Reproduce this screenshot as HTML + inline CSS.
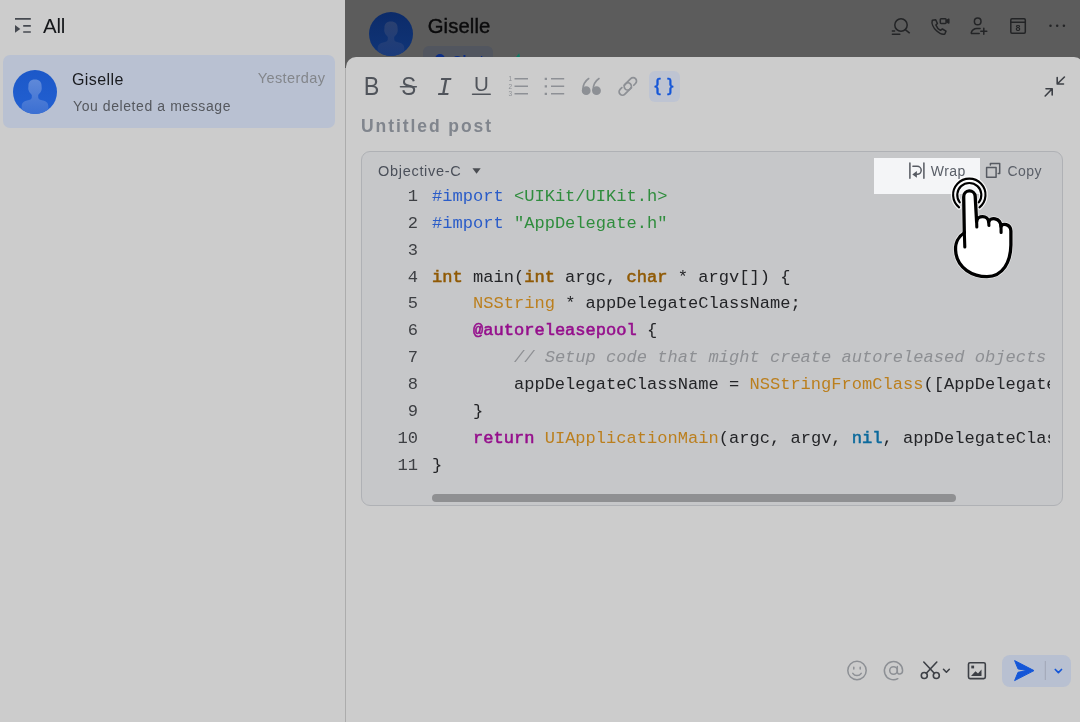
<!DOCTYPE html>
<html lang="en">
<head>
<meta charset="utf-8">
<title>Chat</title>
<style>
*{box-sizing:border-box;margin:0;padding:0}
html,body{width:1080px;height:722px;overflow:hidden;background:#cccccc;font-family:"Liberation Sans",sans-serif;}
.abs{position:absolute}
#side{position:absolute;left:0;top:0;width:345px;height:722px;background:#cccccc}
#divider{position:absolute;left:345px;top:0;width:1px;height:722px;background:#acacac}
#all{position:absolute;left:43px;top:14.500px;font-size:20.500px;color:#15171a;line-height:22px;letter-spacing:-0.2px}
#row{position:absolute;left:3px;top:55px;width:332px;height:73px;background:#b9c1d2;border-radius:7px}
#row .name{position:absolute;left:69px;top:15px;font-size:16px;letter-spacing:0.400px;color:#191b1f;line-height:20px}
#row .sub{position:absolute;left:70px;top:41.500px;font-size:14px;color:#55585e;line-height:18px;letter-spacing:0.580px}
#row .time{position:absolute;right:9.700px;top:15px;font-size:14.500px;color:#83868b;line-height:17px;letter-spacing:0.400px}
.avatar{position:absolute;border-radius:50%;overflow:hidden}
#hdr{position:absolute;left:345px;top:0;width:735px;height:68px;background:#5c5c5c;overflow:hidden}
#hdr .title{position:absolute;left:82.700px;top:14.250px;letter-spacing:0.100px;font-size:20.300px;color:#0b0b0c;line-height:24px;-webkit-text-stroke:0.4px #0b0b0c}
#panel{position:absolute;left:346px;top:57px;width:738px;height:665px;background:#cccccc;border-top-left-radius:10px;border-top-right-radius:10px}
#ptitle{position:absolute;left:15px;top:58px;font-size:17.500px;font-weight:bold;color:#80858d;line-height:22px;letter-spacing:1.920px}
#code{position:absolute;left:15px;top:94px;width:702px;height:355px;background:#c6c7c9;border:1px solid #afb1b5;border-radius:9px;overflow:hidden}
#lang{position:absolute;left:16px;top:10px;font-size:14.500px;letter-spacing:0.700px;color:#4b505a;line-height:18px}
#code pre{position:absolute;left:0;top:30px;font-family:"Liberation Mono",monospace;font-size:17.070px;line-height:26.85px;color:#222326;white-space:pre}
#nums{position:absolute;left:0;top:32.100px;width:56px;text-align:right;font-family:"Liberation Mono",monospace;font-size:17.070px;line-height:26.85px;color:#3d3f43;white-space:pre}
#src{position:absolute;left:70px;top:32.100px;width:618px;overflow:hidden;font-family:"Liberation Mono",monospace;font-size:17.070px;line-height:26.85px;color:#232427;white-space:pre}
.kp{color:#2a5cc8}.st{color:#2f8d3d}.kt{color:#905a05;-webkit-text-stroke:0.55px #905a05}.cl{color:#bb7f1e}.kw{color:#950f8c;-webkit-text-stroke:0.55px #950f8c}.cm{color:#8d8f93;font-style:italic}.nl{color:#0c6a9c;-webkit-text-stroke:0.55px #0c6a9c}
#sb{position:absolute;left:70px;top:342px;width:523.500px;height:8px;border-radius:4px;background:#8f9092}
#wrapbtn{position:absolute;left:874px;top:158px;width:106px;height:36px;background:#f4f5f7}
.btxt{position:absolute;font-size:14px;letter-spacing:0.450px;color:#5a5f68;line-height:18px}
.tl{position:absolute;text-align:center;color:#50545b;line-height:28px;height:28px;white-space:pre}
#sendbox{position:absolute;left:1002px;top:655px;width:69px;height:32px;border-radius:8px;background:#b8c0d1}
</style>
</head>
<body>
<div id="root" style="position:absolute;left:0;top:0;width:1080px;height:722px;will-change:transform;overflow:hidden">
<div id="side">
  <svg class="abs" style="left:0;top:0" width="40" height="40" viewBox="0 0 40 40" fill="none" stroke="#454950" stroke-width="1.7" stroke-linecap="butt"><path d="M15 18.9h15.800M23.200 25.800h7.600M23.200 32h7.600"/><path d="M15 25v7.800l5.300-3.900z" fill="#454950" stroke="none"/></svg>
  <div id="all">All</div>
  <div id="row">
    <div class="avatar" style="left:10.100px;top:14.500px;width:44px;height:44px;background:linear-gradient(180deg,#1c58c8,#2260d2)">
      <svg width="44" height="44" viewBox="0 0 44 44"><defs><linearGradient id="pg1" x1="0" y1="0" x2="0" y2="1"><stop offset="0" stop-color="#5f89d9"/><stop offset="1" stop-color="#3b6fd2"/></linearGradient></defs><path d="M21.8 9.5C26.5 9.5 28.6 12 28.6 16C28.6 17.5 29 18.5 28.5 20C28 22 26.5 23.5 25.2 25L25.2 27.5C25.2 29 27 30 30 30.5C33.5 31.2 35.3 33 35.3 36L35.3 44L8.7 44L8.7 36C8.7 33 10.5 31.2 14 30.5C17 30 18.800 29 18.800 27.500L18.800 25C17.500 23.500 16 22 15.500 20C15 18.500 15.400 17.500 15.400 16C15.400 12 17.500 9.500 21.800 9.500Z" fill="url(#pg1)"/></svg>
    </div>
    <div class="name">Giselle</div>
    <div class="sub">You deleted a message</div>
    <div class="time">Yesterday</div>
  </div>
</div>
<div id="divider"></div>
<div id="hdr">
  <div class="avatar" style="left:24.100px;top:11.900px;width:44px;height:44px;background:linear-gradient(180deg,#0c2b69,#103578)">
    <svg width="44" height="44" viewBox="0 0 44 44"><defs><linearGradient id="pg2" x1="0" y1="0" x2="0" y2="1"><stop offset="0" stop-color="#2a4070"/><stop offset="1" stop-color="#1b3b7b"/></linearGradient></defs><path d="M21.8 9.5C26.5 9.5 28.6 12 28.6 16C28.6 17.5 29 18.5 28.5 20C28 22 26.5 23.5 25.2 25L25.2 27.5C25.2 29 27 30 30 30.5C33.5 31.2 35.3 33 35.3 36L35.3 44L8.7 44L8.7 36C8.7 33 10.5 31.2 14 30.5C17 30 18.800 29 18.800 27.500L18.800 25C17.500 23.500 16 22 15.500 20C15 18.500 15.400 17.500 15.400 16C15.400 12 17.500 9.500 21.800 9.500Z" fill="url(#pg2)"/></svg>
  </div>
  <div class="title">Giselle</div>
  <div class="abs" style="left:78px;top:46.200px;width:70px;height:20px;border-radius:6px;background:#52565f"></div>
  <div class="abs" style="left:90.200px;top:54.200px;width:10.200px;height:10.200px;border-radius:50%;background:#0b2d85"></div>
  <div class="abs" style="left:107px;top:52.900px;font-size:14px;line-height:16px;font-weight:bold;color:#0b2d85;letter-spacing:0.300px">Chat</div>
  <div class="abs" style="left:171px;top:54px;width:0;height:0;border-left:5px solid #0f7a63;border-top:4px solid transparent;border-bottom:4px solid transparent;transform:rotate(40deg)"></div>
</div>
<div id="panel">
  <div id="ptitle">Untitled post</div>
  <div id="code">
    <div id="lang">Objective-C</div>
    <svg class="abs" style="left:109.500px;top:15.500px" width="10" height="7" viewBox="0 0 11 8"><path d="M0.300 0.300h9.400l-4.700 6.200z" fill="#4a4d52"/></svg>
<div id="nums">1
2
3
4
5
6
7
8
9
10
11</div>
<div id="src"><span class="kp">#import </span><span class="st">&lt;UIKit/UIKit.h&gt;</span>
<span class="kp">#import </span><span class="st">"AppDelegate.h"</span>

<span class="kt">int</span> main(<span class="kt">int</span> argc, <span class="kt">char</span> * argv[]) {
    <span class="cl">NSString</span> * appDelegateClassName;
    <span class="kw">@autoreleasepool</span> {
        <span class="cm">// Setup code that might create autoreleased objects goes here.</span>
        appDelegateClassName = <span class="cl">NSStringFromClass</span>([AppDelegate class]);
    }
    <span class="kw">return</span> <span class="cl">UIApplicationMain</span>(argc, argv, <span class="nl">nil</span>, appDelegateClassName);
}</div>
    <div id="sb"></div>
  </div>
</div>

<div class="abs" style="left:649px;top:71px;width:31px;height:30.500px;border-radius:6px;background:#bec4d2"></div>
<div class="tl" style="left:363px;top:72.300px;font-size:26px;width:16px;transform:scaleX(0.9)">B</div>
<div class="tl" style="left:400px;top:72.300px;font-size:26px;width:16.500px;transform:scaleX(0.86)">S</div>
<div class="tl" style="left:436.500px;top:74.500px;font-size:25.500px;width:16px;font-family:'Liberation Mono',monospace;font-style:italic">I</div>
<div class="tl" style="left:472.500px;top:69.500px;font-size:20.500px;width:18px">U</div>
<div class="tl" style="left:650.500px;top:70.800px;font-size:18.500px;width:27px;color:#1456d8;word-spacing:1.500px;-webkit-text-stroke:0.500px #1456d8">{ }</div>
<div id="wrapbtn"></div>
<div class="btxt" style="left:930.800px;top:162.300px">Wrap</div>
<div class="btxt" style="left:1007.500px;top:162.300px">Copy</div>
<div id="sendbox"></div>
<svg id="ov" class="abs" style="left:0;top:0;pointer-events:none" width="1080" height="722" viewBox="0 0 1080 722" fill="none">
  <!-- header icons -->
  <g stroke="#232426" stroke-width="1.5" stroke-linecap="round" stroke-linejoin="round">
    <circle cx="901" cy="25" r="6.2"/>
    <path d="M905.600 29.800L909.300 32.800M892.400 31h2.200M892.400 34.200h7.400"/>
    <path d="M932.300 20.300c-1 3 1 7.500 4.200 10.500c3 2.800 6.500 3.800 8.300 3.200l1.200-2.800l-3.600-2.200l-2 1.300c-1.800-.9-3.700-3-4.500-5.200l1.500-1.600l-1.700-3.800z"/>
    <rect x="940.300" y="18.800" width="5.800" height="4.600" rx="0.800"/>
    <path d="M946.600 20.600l2.200-1.400v3.800l-2.200-1.400z" fill="#232426"/>
    <circle cx="977.700" cy="21.400" r="3.300"/>
    <path d="M979.200 33.600h-7.200c-.6 0-.9-.5-.7-1.100c.8-2.500 2.800-4.100 5.600-4.100h3.200M983.800 28.200v6M980.800 31.200h6"/>
    <rect x="1010.800" y="18.800" width="14.500" height="14.500" rx="1.200"/>
    <path d="M1011 22.300h14"/>
  </g>
  <text x="1018" y="31.300" text-anchor="middle" font-family="Liberation Sans, sans-serif" font-weight="bold" font-size="9" fill="#232426">8</text>
  <g fill="#232426"><circle cx="1050.500" cy="25.800" r="1.250"/><circle cx="1057.200" cy="25.800" r="1.250"/><circle cx="1063.900" cy="25.800" r="1.250"/></g>

  <!-- toolbar -->
  <g stroke="#50545b" stroke-width="1.600" stroke-linecap="round">
    <path d="M400.500 86.800h15.800"/>
    <path d="M472.600 94.200h17.600"/>
  </g>
  <g stroke="#8d9095" stroke-width="1.500" stroke-linecap="butt">
    <path d="M514.500 78.800h13.500M514.500 86.300h13.500M514.500 93.800h13.500"/>
    <path d="M551 78.800h13.200M551 86.300h13.200M551 93.800h13.200"/>
    <path d="M544.700 78.800h2.300M544.700 86.300h2.300M544.700 93.800h2.300" stroke-width="2.200"/>
  </g>
  <g font-family="Liberation Sans, sans-serif" font-size="6.500" fill="#8d9095" text-anchor="middle"><text x="510.200" y="81.200">1</text><text x="510.200" y="88.600">2</text><text x="510.200" y="96.100">3</text></g>
  <g fill="#8d9095" stroke="#8d9095" stroke-width="1.600" stroke-linecap="round">
    <circle cx="586.200" cy="90.700" r="3.600"/><path d="M582.700 90.500C582.700 85 585.300 80.800 588.700 78.500" fill="none"/>
    <circle cx="596.500" cy="90.700" r="3.600"/><path d="M593 90.500C593 85 595.600 80.800 599 78.500" fill="none"/>
  </g>
  <g transform="translate(627.800 86.400) rotate(-45)" stroke="#8d9095" stroke-width="1.700" stroke-linecap="round">
    <path d="M-1.800 -3.400H0.300A3.400 3.400 0 0 1 0.300 3.400H-7.500A3.400 3.400 0 0 1 -7.500 -3.400H-5"/>
    <path d="M1.800 3.400H-0.300A3.400 3.400 0 0 1 -0.300 -3.400H7.500A3.400 3.400 0 0 1 7.500 3.400H5"/>
  </g>
  <!-- collapse -->
  <g stroke="#3d4046" stroke-width="1.600" stroke-linecap="round" stroke-linejoin="round">
    <path d="M1064.400 77l-7.200 7M1057.200 77.600v6.400h6.300M1045.200 96l7-7.200M1052.200 95v-6.200h-6.200"/>
  </g>

  <!-- wrap / copy icons -->
  <g stroke="#565a62" stroke-width="1.500" stroke-linecap="round" stroke-linejoin="round">
    <path d="M909.900 163v15.200M923.900 163v15.200"/>
    <path d="M912.900 166.300h4.300a4 4 0 0 1 0 8h-0.500"/>
    <path d="M986.600 167.400h9.500v9.800h-9.500z"/>
    <path d="M990.400 165v-1.500h9.300v10h-1.500"/>
  </g>
  <path d="M912.300 174.400l4.600-3.300v6.600z" fill="#565a62"/>

  <!-- bottom icons -->
  <g stroke="#8d9095" stroke-width="1.500" stroke-linecap="round">
    <circle cx="857" cy="670.500" r="9.200"/>
    <path d="M852.800 673.300c2 3 6.400 3 8.400 0"/>
    <path d="M853.800 667.300v1.600M860.200 667.300v1.600"/>
    <circle cx="893.500" cy="670.500" r="3.800"/>
    <path d="M897.300 666.500v5.200c0 3.500 5.300 3.200 5.300-1.200a9.100 9.100 0 1 0-4.800 8.200"/>
  </g>
  <g stroke="#3d4046" stroke-width="1.600" stroke-linecap="round" stroke-linejoin="round">
    <circle cx="924.300" cy="675.500" r="3"/><circle cx="936.300" cy="675.500" r="3"/>
    <path d="M926.300 673.300L936.800 662M934.300 673.300L923.800 662"/>
    <path d="M943.500 669.300l2.900 2.900l2.900-2.900"/>
    <rect x="968.500" y="662.800" width="16.800" height="15.800" rx="1.500"/>
  </g>
  <path d="M971 676l4.500-4.800l2.500 2.300l3.500-4v6.500z" fill="#3d4046"/>
  <rect x="971.300" y="665.600" width="2.800" height="2.800" fill="#3d4046"/>
  <path d="M1014.600 660.600l19.400 10l-19.400 10l3.400-8.300l9-1.700l-9-1.700z" fill="#1456d8" stroke="#1456d8" stroke-width="1" stroke-linejoin="round"/>
  <path d="M1045.300 661v19" stroke="#a0a6b6" stroke-width="1"/>
  <path d="M1055.300 669.500l3.100 3.100l3.100-3.100" stroke="#1456d8" stroke-width="1.700" stroke-linecap="round" stroke-linejoin="round"/>

  <!-- hand cursor -->
  <g stroke-linejoin="round" stroke-linecap="round" fill="none">
    <g stroke="#fff">
      <path d="M959.1 207.4A16.2 16.2 0 1 1 979.5 207.4" stroke-width="4.6" stroke-opacity="0.85"/>
      <path d="M959.8 202.4A12.05 12.05 0 1 1 978.8 202.4" stroke-width="4.6" stroke-opacity="0.85"/>
      <path d="M964.3 232.8L963.7 197A5.75 5.75 0 0 1 975.2 196.4L976.6 221.5C977.3 215 988.2 215 988.7 222C989.8 217 1000.6 217 1001 226.5C1002 223 1010.6 223.3 1010.9 231L1010.9 245C1010.6 262 1003 276.600 987 276.600C972 276.600 958.5 268 956 254C954 243 959 236 964.3 232.8Z" stroke-width="4.6" stroke-opacity="0.6" fill="#fff"/>
    </g>
    <g stroke="#000">
      <path d="M959.1 207.4A16.2 16.2 0 1 1 979.5 207.4" stroke-width="2.1"/>
      <path d="M959.8 202.4A12.05 12.05 0 1 1 978.8 202.4" stroke-width="2.1"/>
      <path d="M964.3 232.8L963.7 197A5.75 5.75 0 0 1 975.2 196.4L976.6 221.5C977.3 215 988.2 215 988.7 222C989.8 217 1000.6 217 1001 226.5C1002 223 1010.6 223.3 1010.9 231L1010.9 245C1010.6 262 1003 276.600 987 276.600C972 276.600 958.5 268 956 254C954 243 959 236 964.3 232.8Z" stroke-width="3.3" fill="#fff"/>
      <path d="M964.3 232L964.8 247M976.6 220L976.8 227M988.7 221L988.9 225.5M1001 225L1001.1 232.5" stroke-width="3.1"/>
    </g>
  </g>
</svg>

</div>
</body>
</html>
